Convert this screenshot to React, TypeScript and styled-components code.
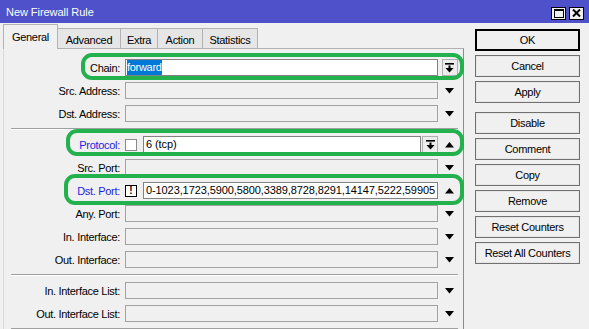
import React from "react";
import styled, { createGlobalStyle } from "styled-components";

const Global = createGlobalStyle`
  html, body { margin: 0; padding: 0; background: #f0f0f0; }
  body { font-family: "Liberation Sans", Arial, sans-serif; font-size: 11px; color: #000; }
  #root { width: 589px; height: 329px; }
`;

const Window = styled.div`
  position: relative;
  width: 589px;
  height: 329px;
  overflow: hidden;
  background: #f0f0f0;
  display: flex;
  flex-direction: column;
  letter-spacing: -0.3px;
`;

const TitleBar = styled.div`
  flex: none;
  height: 23px;
  background: #4e51c9;
  display: flex;
  align-items: center;
  padding: 0 5px 0 6px;
  color: #fff;
`;

const Title = styled.div`
  flex: 1;
  font-size: 11px;
  letter-spacing: -0.05px;
  padding-top: 1px;
`;

const TitleButtons = styled.div`
  display: flex;
  gap: 3px;
  margin-top: 3px;
`;

const TitleButton = styled.div`
  width: 15px;
  height: 13px;
  box-sizing: border-box;
  border: 1px solid #000;
  background: #f0f0f0;
  display: flex;
  align-items: center;
  justify-content: center;
`;

const Body = styled.div`
  flex: 1;
  display: flex;
  padding: 1px 0 0 3px;
`;

const LeftCol = styled.div`
  width: 461px;
  display: flex;
  flex-direction: column;
`;

const TabRow = styled.div`
  display: flex;
  align-items: flex-end;
  height: 25px;
  margin-bottom: -1px;
  position: relative;
  z-index: 1;
`;

const Tab = styled.div<{ $active?: boolean; $w: number }>`
  box-sizing: border-box;
  width: ${(p) => p.$w}px;
  height: ${(p) => (p.$active ? "25px" : "21px")};
  padding-top: ${(p) => (p.$active ? "6px" : "5px")};
  margin-left: ${(p) => (p.$active ? "0" : "-1px")};
  background: ${(p) => (p.$active ? "#f0f0f0" : "#e6e6e6")};
  border: 1px solid #b2b2b2;
  border-bottom: ${(p) => (p.$active ? "none" : "1px solid #b2b2b2")};
  line-height: 13px;
  text-align: center;
  color: #000;
  &:first-child { margin-left: 0; }
`;

const Panel = styled.div`
  flex: 1;
  background: #f0f0f0;
  border-top: 1px solid #b2b2b2;
  border-left: 1px solid #dadada;
  border-right: 1px solid #8c8c8c;
  padding-top: 10px;
  display: flex;
  flex-direction: column;
`;

const Row = styled.div`
  display: flex;
  align-items: center;
  height: 17px;
  margin-bottom: 6px;
`;

const Label = styled.div<{ $accent?: boolean }>`
  flex: none;
  width: 116px;
  margin-right: 5px;
  text-align: right;
  white-space: nowrap;
  color: ${(p) => (p.$accent ? "#1e1ee0" : "#000")};
`;

const Field = styled.div`
  flex: none;
  width: 313px;
  height: 17px;
  display: flex;
  align-items: center;
`;

const EmptyBox = styled.div`
  flex: 1;
  height: 17px;
  box-sizing: border-box;
  border: 1px solid #a2a2a2;
  background: #f0f0f0;
`;

const TextBox = styled.div`
  flex: 1;
  height: 17px;
  box-sizing: border-box;
  border: 1px solid #828282;
  background: #fff;
  padding: 0 1px;
  line-height: 15px;
  white-space: nowrap;
  overflow: hidden;
`;

const Selected = styled.span`
  background: #0078d7;
  color: #fff;
  display: inline-block;
  line-height: 15px;
`;

const PortText = styled.span`
  letter-spacing: -0.1px;
  padding-left: 1px;
`;

const Check = styled.div<{ $bang?: boolean }>`
  flex: none;
  width: 12px;
  height: 12px;
  box-sizing: border-box;
  margin-right: 6px;
  border: 1px solid ${(p) => (p.$bang ? "#000" : "#8a8a8a")};
  background: #fff;
  display: flex;
  align-items: center;
  justify-content: center;
  font-weight: bold;
  font-size: 10px;
  line-height: 10px;
  letter-spacing: 0;
`;

const DropButton = styled.div`
  flex: none;
  width: 16px;
  height: 17px;
  box-sizing: border-box;
  border: 1px solid #b0b0b0;
  background: #ededed;
  display: flex;
  align-items: center;
  justify-content: center;
  margin-left: 1px;
`;

const ArrowCell = styled.div`
  flex: none;
  width: 22px;
  height: 17px;
  display: flex;
  align-items: center;
  justify-content: center;
`;

const Separator = styled.div`
  height: 0;
  border-top: 1px solid #a0a0a0;
  border-bottom: 1px solid #fff;
  margin: 0 5px 6px 7px;
`;

const ButtonCol = styled.div`
  flex: none;
  width: 105px;
  margin-left: 11px;
  padding-top: 5px;
  display: flex;
  flex-direction: column;
  gap: 4px;
`;

const Button = styled.div<{ $default?: boolean; $spaced?: boolean }>`
  height: 22px;
  box-sizing: border-box;
  border: 1px solid ${(p) => (p.$default ? "#000" : "#707070")};
  box-shadow: ${(p) => (p.$default ? "inset 0 0 0 1px #000" : "inset 0 0 0 1px #e6e6e6")};
  background: #f0f0f0;
  margin-top: ${(p) => (p.$spaced ? "5px" : "0")};
  display: flex;
  align-items: center;
  justify-content: center;
  color: #000;
  font-size: 11px;
`;

const Highlight = styled.div<{ $x: number; $y: number; $w: number; $h: number }>`
  position: absolute;
  left: ${(p) => p.$x}px;
  top: ${(p) => p.$y}px;
  width: ${(p) => p.$w}px;
  height: ${(p) => p.$h}px;
  box-sizing: border-box;
  border: 4px solid #22b14c;
  border-radius: 11px;
  pointer-events: none;
`;

const Down = () => (
  <svg width="9" height="6" viewBox="0 0 9 6">
    <polygon points="0,0 9,0 4.5,5.5" fill="#000" />
  </svg>
);

const Up = () => (
  <svg width="9" height="6" viewBox="0 0 9 6">
    <polygon points="0,5.5 9,5.5 4.5,0" fill="#000" />
  </svg>
);

const DropGlyph = () => (
  <svg width="9" height="10" viewBox="0 0 9 10">
    <rect x="0" y="0" width="9" height="1.6" fill="#000" />
    <rect x="3.5" y="2.5" width="2" height="3" fill="#000" />
    <polygon points="0.5,5 8.5,5 4.5,9.5" fill="#000" />
  </svg>
);

const MaxGlyph = () => (
  <svg width="10" height="9" viewBox="0 0 10 9">
    <rect x="0.5" y="0.5" width="9" height="8" fill="none" stroke="#000" strokeWidth="1" />
    <rect x="0" y="0" width="10" height="2" fill="#000" />
  </svg>
);

const CloseGlyph = () => (
  <svg width="9" height="8" viewBox="0 0 9 8">
    <path d="M1 0.5 L8 7.5 M8 0.5 L1 7.5" stroke="#000" strokeWidth="2" />
  </svg>
);

type Arrow = "down" | "up" | "none";

const PlainRow = ({ label, arrow = "down" }: { label: string; arrow?: Arrow }) => (
  <Row>
    <Label>{label}</Label>
    <Field>
      <EmptyBox />
    </Field>
    <ArrowCell>{arrow === "down" ? <Down /> : arrow === "up" ? <Up /> : null}</ArrowCell>
  </Row>
);

const tabs: { name: string; w: number }[] = [
  { name: "General", w: 55 },
  { name: "Advanced", w: 64 },
  { name: "Extra", w: 38 },
  { name: "Action", w: 46 },
  { name: "Statistics", w: 56 },
];

const buttons = [
  "OK",
  "Cancel",
  "Apply",
  "Disable",
  "Comment",
  "Copy",
  "Remove",
  "Reset Counters",
  "Reset All Counters",
];

export default function App() {
  return (
    <>
      <Global />
      <Window>
        <TitleBar>
          <Title>New Firewall Rule</Title>
          <TitleButtons>
            <TitleButton>
              <MaxGlyph />
            </TitleButton>
            <TitleButton>
              <CloseGlyph />
            </TitleButton>
          </TitleButtons>
        </TitleBar>
        <Body>
          <LeftCol>
            <TabRow>
              {tabs.map((t, i) => (
                <Tab key={t.name} $active={i === 0} $w={t.w}>
                  {t.name}
                </Tab>
              ))}
            </TabRow>
            <Panel>
              <Row>
                <Label>Chain:</Label>
                <Field>
                  <TextBox>
                    <Selected>forward</Selected>
                  </TextBox>
                </Field>
                <ArrowCell>
                  <DropButton>
                    <DropGlyph />
                  </DropButton>
                </ArrowCell>
              </Row>
              <PlainRow label="Src. Address:" />
              <PlainRow label="Dst. Address:" />
              <Separator />
              <Row>
                <Label $accent>Protocol:</Label>
                <Field>
                  <Check />
                  <TextBox>
                    <PortText>6 (tcp)</PortText>
                  </TextBox>
                  <DropButton>
                    <DropGlyph />
                  </DropButton>
                </Field>
                <ArrowCell>
                  <Up />
                </ArrowCell>
              </Row>
              <PlainRow label="Src. Port:" />
              <Row>
                <Label $accent>Dst. Port:</Label>
                <Field>
                  <Check $bang>!</Check>
                  <TextBox>
                    <PortText>0-1023,1723,5900,5800,3389,8728,8291,14147,5222,59905</PortText>
                  </TextBox>
                </Field>
                <ArrowCell>
                  <Up />
                </ArrowCell>
              </Row>
              <PlainRow label="Any. Port:" />
              <PlainRow label="In. Interface:" />
              <PlainRow label="Out. Interface:" />
              <Separator />
              <PlainRow label="In. Interface List:" />
              <PlainRow label="Out. Interface List:" />
              <Separator />
            </Panel>
          </LeftCol>
          <ButtonCol>
            {buttons.map((b) => (
              <Button key={b} $default={b === "OK"} $spaced={b === "Disable"}>
                {b}
              </Button>
            ))}
          </ButtonCol>
        </Body>
        <Highlight $x={81} $y={53} $w={383} $h={27} />
        <Highlight $x={66} $y={129} $w={398} $h={27} />
        <Highlight $x={64} $y={174} $w={400} $h={31} />
      </Window>
    </>
  );
}
